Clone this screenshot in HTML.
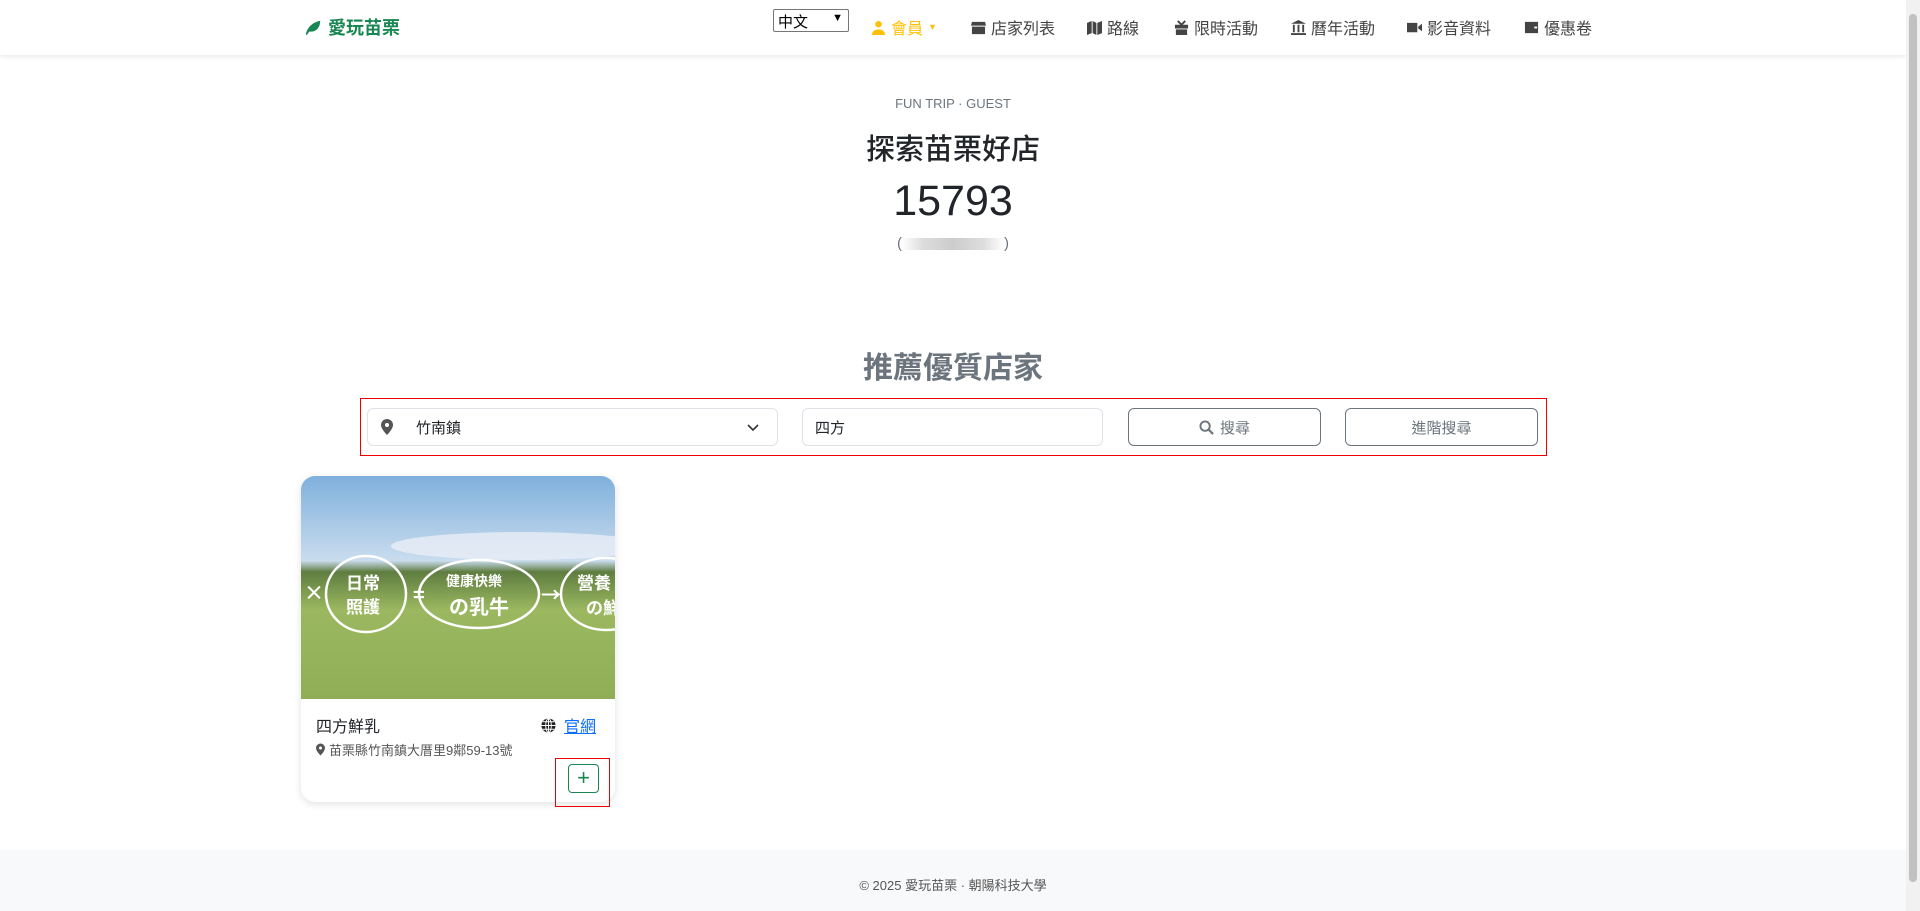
<!DOCTYPE html>
<html><head><meta charset="utf-8"><style>
*{box-sizing:border-box;margin:0;padding:0}
body{width:1920px;height:911px;overflow:hidden;background:#fff;font-family:"Liberation Sans","Noto Sans CJK TC",sans-serif;color:#212529;position:relative}
.abs{position:absolute}
.nav{left:0;top:0;width:1906px;height:55px;background:#fff;box-shadow:0 2px 4px rgba(0,0,0,.08)}
.ni{position:absolute;top:15px;font-size:16px;color:#444;display:flex;align-items:center;gap:5px;white-space:nowrap}
.ni svg{width:15px;height:15px;fill:#444}
.c{left:0;width:1906px;text-align:center}
.btn{position:absolute;top:408px;height:38px;border:1px solid #6c757d;border-radius:6px;display:flex;align-items:center;justify-content:center;font-size:15px;color:#6c757d;gap:6px}
.fld{position:absolute;top:408px;height:38px;border:1px solid #dee2e6;border-radius:6px;font-size:15px;display:flex;align-items:center}
</style></head><body>
<div class="abs nav"></div>
<div class="abs" style="left:304px;top:14px;display:flex;align-items:center;gap:6px;color:#198754;font-size:18px;font-weight:bold">
<svg width="18" height="18" viewBox="0 0 20 20"><path d="M2 18C4 10 9 5 18 3C18 11 13 16 6 15L3 19Z" fill="#198754"/></svg>愛玩苗栗</div>
<div class="abs" style="left:773px;top:9px;width:76px;height:23px;border:1px solid #767676;border-radius:2px;font-size:15px;padding:1px 4px;color:#000">中文<span style="position:absolute;right:5px;top:2px;font-size:11px">▼</span></div>
<div class="ni" style="left:871px;color:#ffc107"><svg viewBox="0 0 16 16" style="fill:#ffc107"><circle cx="8" cy="4.5" r="3.5"/><path d="M1 16c0-4 3-6 7-6s7 2 7 6z"/></svg>會員 <span style="font-size:9px">▼</span></div>
<div class="ni" style="left:971px"><svg viewBox="0 0 16 16"><path d="M1 2h14l1 4H0zM1 7h14v8H1z"/></svg>店家列表</div>
<div class="ni" style="left:1087px"><svg viewBox="0 0 16 16"><path d="M0 3l5-2v13l-5 2zM6 1l4 2v13l-4-2zM11 3l5-2v13l-5 2z"/></svg>路線</div>
<div class="ni" style="left:1174px"><svg viewBox="0 0 16 16"><path d="M1 5h14v4H1zM2 10h12v6H2z"/><path d="M4 1l4 4 4-4" stroke="#444" fill="none" stroke-width="2"/></svg>限時活動</div>
<div class="ni" style="left:1291px"><svg viewBox="0 0 16 16"><path d="M8 0l8 4H0zM2 5h2v8H2zM7 5h2v8H7zM12 5h2v8h-2zM0 14h16v2H0z"/></svg>曆年活動</div>
<div class="ni" style="left:1407px"><svg viewBox="0 0 16 16"><path d="M0 3h11v10H0zM12 7l4-3v8l-4-3z"/></svg>影音資料</div>
<div class="ni" style="left:1524px"><svg viewBox="0 0 16 16"><path d="M1 2h14v12H1z"/><rect x="11" y="7" width="3" height="2" fill="#fff"/></svg>優惠卷</div>

<div class="abs c" style="top:96px;font-size:13px;color:#6c757d">FUN TRIP · GUEST</div>
<div class="abs c" style="top:126px;font-size:29px;font-weight:500;color:#212529">探索苗栗好店</div>
<div class="abs c" style="top:177px;font-size:43px;font-weight:300;color:#212529">15793</div>
<div class="abs c" style="top:235px;font-size:15px;color:#6c757d">(<span style="display:inline-block;width:102px;height:12px;background:linear-gradient(90deg,#fff,#ddd 20%,#ccc 50%,#ddd 80%,#fff);vertical-align:middle"></span>)</div>
<div class="abs c" style="top:343px;font-size:30px;font-weight:bold;color:#6c757d">推薦優質店家</div>

<div class="abs" style="left:360px;top:398px;width:1187px;height:58px;border:1px solid #e00"></div>
<div class="fld" style="left:367px;width:411px;padding-left:13px"><svg width="12" height="16" viewBox="0 0 12 16"><path d="M6 0a6 6 0 0 0-6 6c0 4 6 10 6 10s6-6 6-10a6 6 0 0 0-6-6z" fill="#555"/><circle cx="6" cy="6" r="2" fill="#fff"/></svg><span style="margin-left:23px">竹南鎮</span><svg style="position:absolute;right:18px;top:15px" width="12" height="8" viewBox="0 0 12 8"><path d="M1 1l5 5 5-5" stroke="#333" stroke-width="1.6" fill="none"/></svg></div>
<div class="fld" style="left:802px;width:301px;padding-left:12px">四方</div>
<div class="btn" style="left:1128px;width:193px"><svg width="15" height="15" viewBox="0 0 16 16"><circle cx="6.5" cy="6.5" r="5" stroke="#6c757d" stroke-width="2" fill="none"/><path d="M10 10l5 5" stroke="#6c757d" stroke-width="2.4"/></svg>搜尋</div>
<div class="btn" style="left:1345px;width:193px">進階搜尋</div>

<div class="abs" style="left:301px;top:476px;width:314px;height:326px;border-radius:14px;box-shadow:0 2px 8px rgba(0,0,0,.12);overflow:hidden;background:#fff">
<svg width="314" height="223" viewBox="0 0 314 223" style="display:block">
<defs><linearGradient id="s" x1="0" y1="0" x2="0" y2="1"><stop offset="0" stop-color="#7fb0dc"/><stop offset=".38" stop-color="#c9dcee"/><stop offset=".43" stop-color="#5f7d40"/><stop offset=".6" stop-color="#9bb860"/><stop offset="1" stop-color="#8fae55"/></linearGradient></defs>
<rect width="314" height="223" fill="url(#s)"/>
<ellipse cx="220" cy="70" rx="130" ry="14" fill="#e8eef6" opacity=".8"/>
<g fill="none" stroke="#fff" stroke-width="2.5"><ellipse cx="65" cy="118" rx="40" ry="38"/><ellipse cx="178" cy="118" rx="60" ry="34"/><ellipse cx="305" cy="118" rx="45" ry="36"/></g>
<g fill="#fff" font-weight="bold" font-family="Noto Sans CJK TC,sans-serif"><text x="45" y="113" font-size="17">日常</text><text x="45" y="137" font-size="17">照護</text><text x="145" y="110" font-size="14">健康快樂</text><text x="148" y="138" font-size="20">の乳牛</text><text x="3" y="124" font-size="20">×</text><text x="112" y="126" font-size="20">=</text><text x="240" y="126" font-size="20">→</text><text x="276" y="113" font-size="17">營養</text><text x="285" y="138" font-size="17">の鮮</text></g>
</svg>
<div style="position:absolute;left:15px;top:237px;font-size:16px">四方鮮乳</div>
<div style="position:absolute;left:240px;top:237px;font-size:16px;display:flex;align-items:center;gap:8px"><svg width="15" height="15" viewBox="0 0 16 16"><circle cx="8" cy="8" r="7.5" fill="#222"/><path d="M0 8h16M8 0v16M2 4h12M2 12h12" stroke="#fff" stroke-width="1"/><ellipse cx="8" cy="8" rx="3" ry="7.5" fill="none" stroke="#fff"/></svg><span style="color:#0d6efd;text-decoration:underline">官網</span></div>
<div style="position:absolute;left:15px;top:264px;font-size:13px;color:#555;display:flex;align-items:center;gap:4px"><svg width="9" height="13" viewBox="0 0 12 16"><path d="M6 0a6 6 0 0 0-6 6c0 4 6 10 6 10s6-6 6-10a6 6 0 0 0-6-6z" fill="#555"/><circle cx="6" cy="6" r="2" fill="#fff"/></svg>苗栗縣竹南鎮大厝里9鄰59-13號</div>
<div style="position:absolute;left:267px;top:288px;width:31px;height:29px;border:1px solid #198754;border-radius:4px;color:#198754;font-size:22px;line-height:26px;text-align:center">+</div>
</div>
<div class="abs" style="left:555px;top:758px;width:55px;height:49px;border:1px solid #e00"></div>

<div class="abs" style="left:0;top:850px;width:1906px;height:61px;background:#f8f9fa"></div>
<div class="abs c" style="top:875px;font-size:13px;color:#555">© 2025 愛玩苗栗 · 朝陽科技大學</div>
<div class="abs" style="left:1906px;top:0;width:14px;height:911px;background:#f1f1f1"></div>
<div class="abs" style="left:1909px;top:14px;width:8px;height:868px;background:#c1c1c1;border-radius:4px"></div>
</body></html>
